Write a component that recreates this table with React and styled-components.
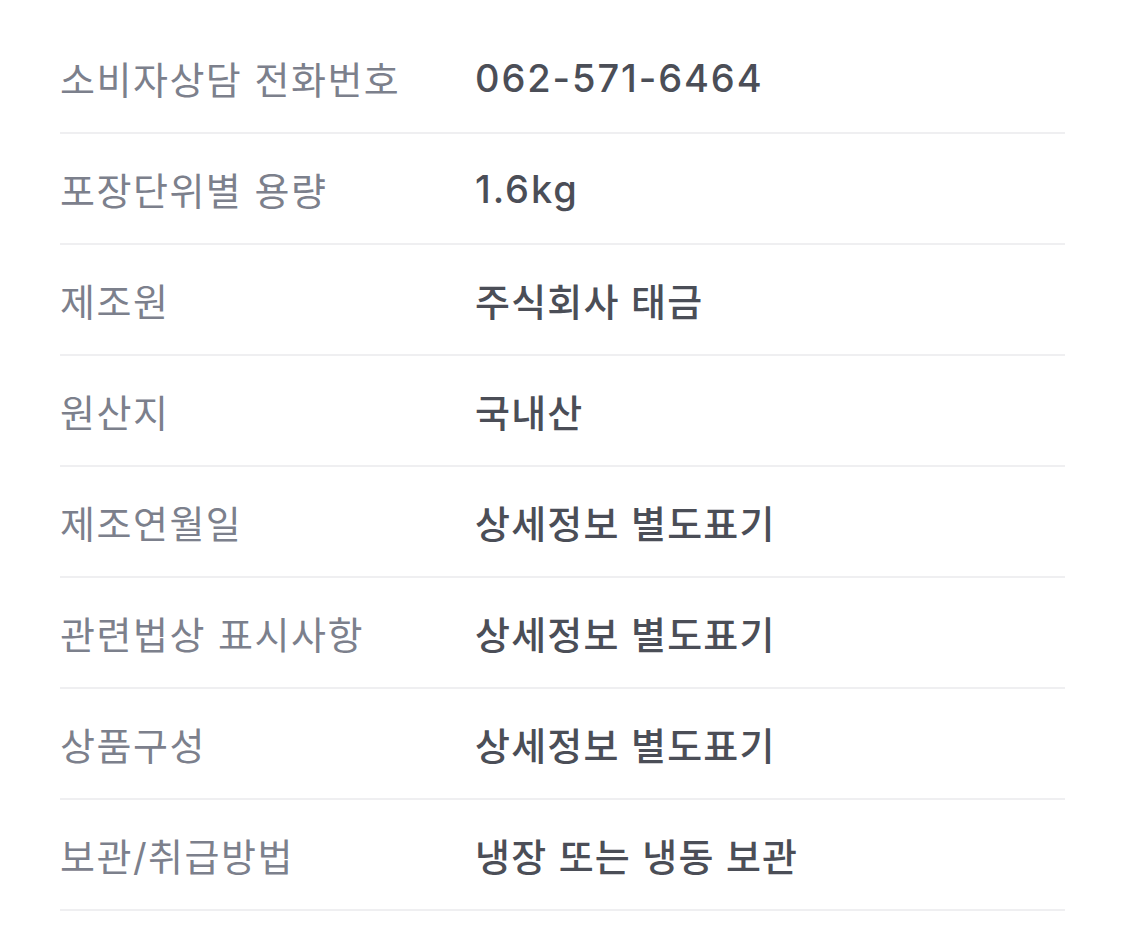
import React from "react";
import styled, { createGlobalStyle } from "styled-components";

const GlobalStyle = createGlobalStyle`
  html, body {
    margin: 0;
    padding: 0;
    background: #ffffff;
  }
  body {
    font-family: Inter, "Noto Sans CJK KR", sans-serif;
  }
`;

const InfoTable = styled.dl`
  margin: 0;
  padding: 23px 60px 0 60px;
  width: 1005px;
`;

const Row = styled.div`
  display: grid;
  grid-template-columns: 415px 1fr;
  align-items: center;
  height: 109px;
  border-bottom: 2px solid #efeff1;
`;

const Label = styled.dt`
  margin: 0;
  font-size: 38px;
  font-weight: 400;
  color: #7c808c;
  letter-spacing: 1.5px;
`;

const Value = styled.dd`
  margin: 0;
  font-size: 38px;
  font-weight: 500;
  color: #4b4e57;
  letter-spacing: ${(p) => (p.$numeric ? "1.9px" : "1.2px")};
`;

const rows = [
  ["소비자상담 전화번호", "062-571-6464", true],
  ["포장단위별 용량", "1.6kg", true],
  ["제조원", "주식회사 태금"],
  ["원산지", "국내산"],
  ["제조연월일", "상세정보 별도표기"],
  ["관련법상 표시사항", "상세정보 별도표기"],
  ["상품구성", "상세정보 별도표기"],
  ["보관/취급방법", "냉장 또는 냉동 보관"],
];

export default function App() {
  return (
    <>
      <GlobalStyle />
      <InfoTable>
        {rows.map(([label, value, numeric]) => (
          <Row key={label}>
            <Label>{label}</Label>
            <Value $numeric={numeric}>{value}</Value>
          </Row>
        ))}
      </InfoTable>
    </>
  );
}
